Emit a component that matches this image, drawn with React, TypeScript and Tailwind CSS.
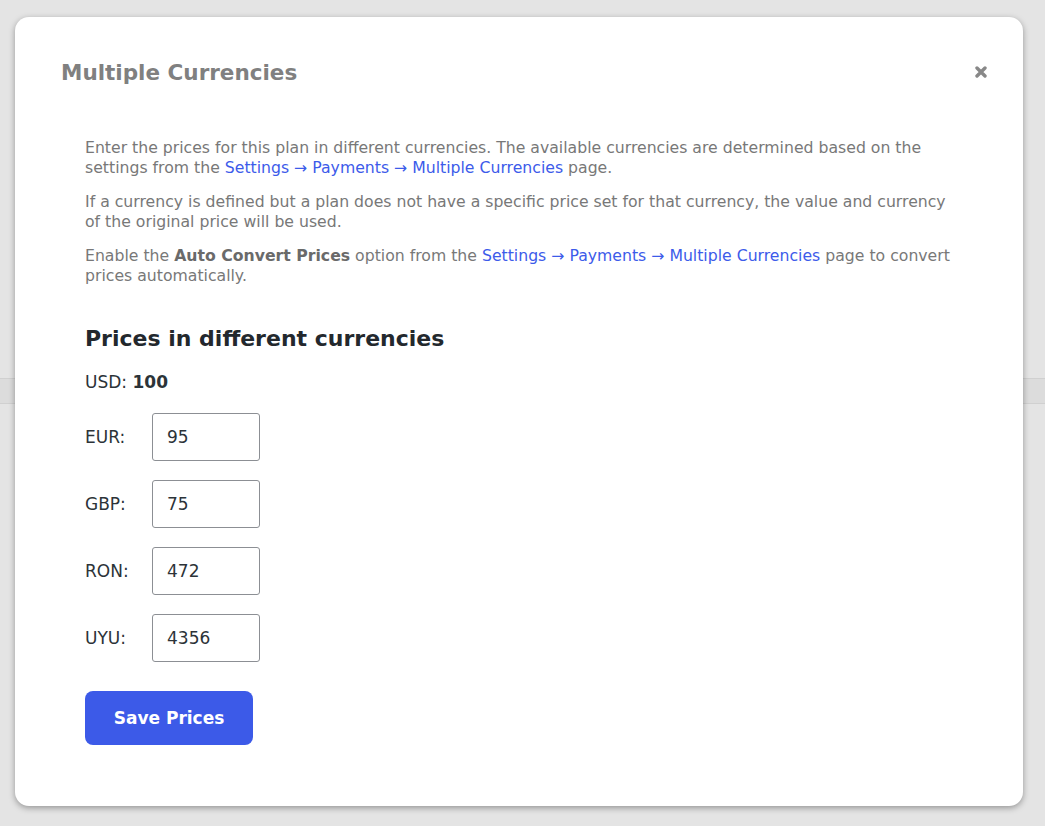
const rates = [
  { code: "EUR", value: "95" },
  { code: "GBP", value: "75" },
  { code: "RON", value: "472" },
  { code: "UYU", value: "4356" },
];

function Link({ children }: { children: React.ReactNode }) {
  return <a href="#" className="text-[#3c5bea] no-underline">{children}</a>;
}

export default function App() {
  return (
    <div className="relative h-[826px] w-full overflow-hidden bg-[#e4e4e4] font-['DejaVu_Sans',Verdana,sans-serif]">
      {/* page behind the overlay */}
      <div className="pt-[378px]">
        <div className="h-[26px] border-y border-[#d0d0d0] bg-[#dcdcdc]" />
      </div>

      {/* modal */}
      <div className="absolute left-[15px] top-[17px] w-[1008px] h-[789px] rounded-[14px] bg-white pl-[46px] pr-[36px] pt-[42px] shadow-[0_2px_6px_rgba(0,0,0,0.35)]">
        <div className="flex items-center justify-between">
          <h2 className="text-[21.5px] leading-[28px] font-bold text-[#808080]">Multiple Currencies</h2>
          <button className="-mt-[2px] text-[#888888]">
            <svg width="12" height="12" viewBox="0 0 12 12">
              <path d="M2 2 L10 10 M10 2 L2 10" stroke="currentColor" strokeWidth="3.4" strokeLinecap="round" />
            </svg>
          </button>
        </div>

        <div className="pl-[24px] pt-[51px] text-[15.7px] leading-[20px]">
          <div className="flex max-w-[870px] flex-col gap-[14px] text-[#787878]">
            <p>
              Enter the prices for this plan in different currencies. The available currencies are determined based on the
              settings from the <Link>Settings → Payments → Multiple Currencies</Link> page.
            </p>
            <p>
              If a currency is defined but a plan does not have a specific price set for that currency, the value and currency
              of the original price will be used.
            </p>
            <p>
              Enable the <strong className="text-[#6a6a6a]">Auto Convert Prices</strong> option from the{" "}
              <Link>Settings → Payments → Multiple Currencies</Link> page to convert prices automatically.
            </p>
          </div>

          <h3 className="mt-[38px] text-[22px] leading-[30px] font-bold text-[#23282d]">Prices in different currencies</h3>

          <p className="mt-[18px] text-[17px] text-[#2c3338]">
            USD: <strong>100</strong>
          </p>

          <div className="mt-[21px] flex flex-col gap-[19px] text-[17px]">
            {rates.map((r) => (
              <div key={r.code} className="flex items-center">
                <label className="w-[67px] text-[#2c3338]">{r.code}:</label>
                <input
                  defaultValue={r.value}
                  className="h-[48px] w-[108px] rounded-[3px] border border-[#8c8f94] px-[14px] text-[17px] text-[#2c3338] outline-none"
                />
              </div>
            ))}
          </div>

          <button className="mt-[29px] h-[54px] w-[168px] rounded-[8px] bg-[#3c5ae8] text-[17px] font-bold text-white">
            Save Prices
          </button>
        </div>
      </div>
    </div>
  );
}
